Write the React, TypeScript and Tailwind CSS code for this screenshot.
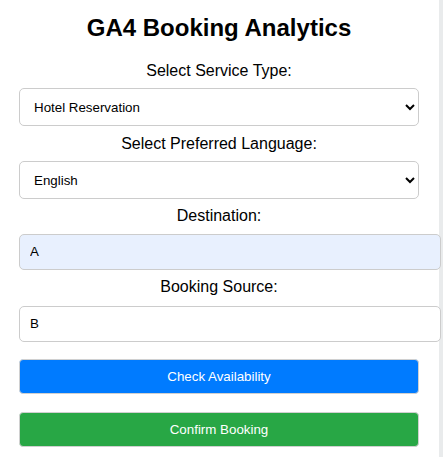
import React from "react"

export default function App() {
  return (
    <div className="flex min-h-[457px] bg-[#e9ebec] font-['Liberation_Sans',Arial,sans-serif] text-black">
      <div className="w-[439px] shrink-0 bg-white pl-[19px] pt-[14px] text-center">
        <div className="w-[400px]">
          <h1 className="text-[24px] font-bold leading-[28px]">GA4 Booking Analytics</h1>

          <label className="mt-[20px] block text-[16px] leading-[18px]">Select Service Type:</label>
          <select
            defaultValue="hotel"
            className="mt-[8px] block h-[38px] w-full rounded-[5px] border border-[#cccccc] bg-white px-[10px] text-[13.33px]"
          >
            <option value="hotel">Hotel Reservation</option>
            <option value="flight">Flight Booking</option>
            <option value="car">Car Rental</option>
          </select>

          <label className="mt-[9px] block text-[16px] leading-[18px]">Select Preferred Language:</label>
          <select
            defaultValue="en"
            className="mt-[8px] block h-[38px] w-full rounded-[5px] border border-[#cccccc] bg-white px-[10px] text-[13.33px]"
          >
            <option value="en">English</option>
            <option value="es">Spanish</option>
            <option value="fr">French</option>
          </select>

          <label className="mt-[8px] block text-[16px] leading-[18px]">Destination:</label>
          <input
            defaultValue="A"
            className="mt-[9px] box-content block h-[14px] w-full rounded-[5px] border border-[#cccccc] bg-[#e8f0fe] px-[10px] py-[10px] text-left text-[13.33px] outline-none"
          />

          <label className="mt-[8px] block text-[16px] leading-[18px]">Booking Source:</label>
          <input
            defaultValue="B"
            className="mt-[10px] box-content block h-[14px] w-full rounded-[5px] border border-[#cccccc] bg-white px-[10px] py-[10px] text-left text-[13.33px] outline-none"
          />

          <button className="mt-[17px] block h-[35px] w-full rounded-[4px] border border-[#d0d0d0] bg-[#007bff] text-[13.33px] text-white">
            Check Availability
          </button>
          <button className="mt-[18px] block h-[35px] w-full rounded-[4px] border border-[#d0d0d0] bg-[#28a745] text-[13.33px] text-white">
            Confirm Booking
          </button>
        </div>
      </div>
    </div>
  )
}
